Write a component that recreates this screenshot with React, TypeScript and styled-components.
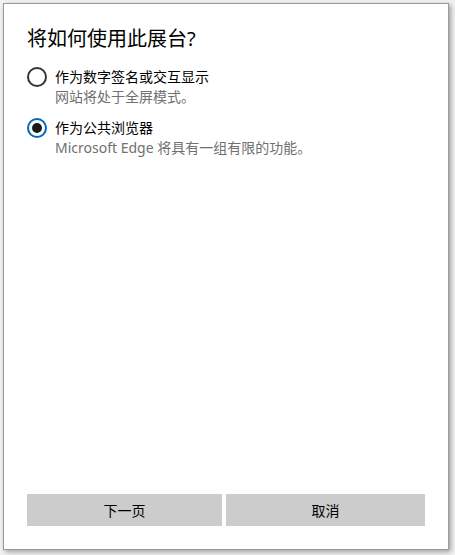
import React, { useState } from "react";
import styled, { createGlobalStyle } from "styled-components";

const GlobalStyle = createGlobalStyle`
  html, body {
    margin: 0;
    padding: 0;
    background: #f2f2f2;
  }
  body {
    font-family: "Noto Sans", "Noto Sans CJK SC", sans-serif;
  }
`;

interface KioskOption {
  id: string;
  label: string;
  description: string;
}

const OPTIONS: KioskOption[] = [
  {
    id: "signage",
    label: "作为数字签名或交互显示",
    description: "网站将处于全屏模式。",
  },
  {
    id: "browser",
    label: "作为公共浏览器",
    description: "Microsoft Edge 将具有一组有限的功能。",
  },
];

const App = () => {
  const [selected, setSelected] = useState<string>("browser");

  return (
    <>
      <GlobalStyle />
      <Page>
        <Dialog>
          <Title>将如何使用此展台?</Title>
          <OptionList>
            {OPTIONS.map((opt) => (
              <OptionRow key={opt.id} onClick={() => setSelected(opt.id)}>
                <Radio checked={selected === opt.id} />
                <OptionText>
                  <OptionLabel>{opt.label}</OptionLabel>
                  <OptionDescription>{opt.description}</OptionDescription>
                </OptionText>
              </OptionRow>
            ))}
          </OptionList>
          <Spacer />
          <ButtonRow>
            <Button>下一页</Button>
            <Button>取消</Button>
          </ButtonRow>
        </Dialog>
      </Page>
    </>
  );
};

const Page = styled.div`
  padding: 3px 0 0 3px;
  height: 555px;
  box-sizing: border-box;
`;

const Dialog = styled.div`
  width: 446px;
  height: 547px;
  box-sizing: border-box;
  background: #ffffff;
  border: 1px solid #9a9a9a;
  box-shadow: 2px 2px 5px rgba(0, 0, 0, 0.35);
  padding: 21px 23px 23px 23px;
  display: flex;
  flex-direction: column;
`;

const Title = styled.h1`
  margin: 0;
  font-size: 20px;
  font-weight: normal;
  line-height: 28px;
  color: #000000;
`;

const OptionList = styled.div`
  display: flex;
  flex-direction: column;
  gap: 11px;
  margin-top: 14px;
`;

const OptionRow = styled.div`
  display: flex;
  align-items: flex-start;
  gap: 8px;
  cursor: pointer;
`;

const Radio = styled.span<{ checked: boolean }>`
  flex: none;
  width: 20px;
  height: 20px;
  box-sizing: border-box;
  border-radius: 50%;
  border: 2px solid ${(p) => (p.checked ? "#0067c0" : "#333333")};
  display: flex;
  align-items: center;
  justify-content: center;
  &::after {
    content: "";
    display: ${(p) => (p.checked ? "block" : "none")};
    width: 10px;
    height: 10px;
    border-radius: 50%;
    background: #1a1a1a;
  }
`;

const OptionText = styled.div`
  display: flex;
  flex-direction: column;
`;

const OptionLabel = styled.div`
  font-size: 14px;
  line-height: 20px;
  color: #000000;
`;

const OptionDescription = styled.div`
  font-size: 14px;
  line-height: 20px;
  color: #707070;
`;

const Spacer = styled.div`
  flex: 1;
`;

const ButtonRow = styled.div`
  display: grid;
  grid-template-columns: 195fr 199fr;
  gap: 4px;
`;

const Button = styled.button`
  height: 32px;
  border: none;
  background: #cccccc;
  color: #000000;
  font-family: "Noto Sans", "Noto Sans CJK SC", sans-serif;
  font-size: 14px;
  padding: 0;
  cursor: pointer;
`;

export default App;
